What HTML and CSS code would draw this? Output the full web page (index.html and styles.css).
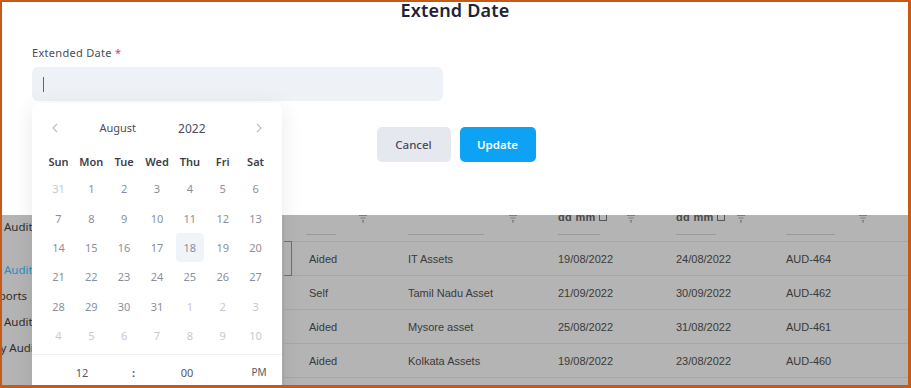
FILE: index.html
```html
<!DOCTYPE html>
<html lang="en">
<head>
    <meta charset="UTF-8">
    <meta name="viewport" content="width=device-width, initial-scale=1.0">
    <title>Extend Date</title>
    <link rel="stylesheet" href="styles.css">
</head>
<body>
    <div class="frame">
        <div class="modal">
            <h2 class="modal-title">Extend Date</h2>
            <div class="field">
                <label class="field-label">Extended Date <span class="req">*</span></label>
                <div class="field-input"><span class="caret"></span></div>
            </div>
            <div class="actions">
                <button class="btn btn-cancel">Cancel</button>
                <button class="btn btn-update">Update</button>
            </div>
        </div>

        <div class="backdrop">
            <ul class="side">
                <li class="side-first">Audit Plan</li>
                <li class="side-active">Audit List</li>
                <li class="side-cut1">Reports</li>
                <li>Audit Tasks</li>
                <li class="side-cut2">My Audits</li>
            </ul>
            <div class="table">
                <div class="row head">
                    <div class="cell c0"></div>
                    <div class="cell c1"><div class="htop"><span></span><svg class="filter" viewBox="0 0 8 8"><path d="M0 0.5h8M1.5 3h5M3 5.5h2M4 5.5v2.5" stroke="#7d7d7d" stroke-width="1.2" fill="none"/></svg></div><div class="uline w30"></div></div>
                    <div class="cell c2"><div class="htop"><span></span><svg class="filter" viewBox="0 0 8 8"><path d="M0 0.5h8M1.5 3h5M3 5.5h2M4 5.5v2.5" stroke="#7d7d7d" stroke-width="1.2" fill="none"/></svg></div><div class="uline w76"></div></div>
                    <div class="cell c3"><div class="htop"><span class="dd">dd mm <i class="cal"></i></span><svg class="filter" viewBox="0 0 8 8"><path d="M0 0.5h8M1.5 3h5M3 5.5h2M4 5.5v2.5" stroke="#7d7d7d" stroke-width="1.2" fill="none"/></svg></div><div class="uline w42"></div></div>
                    <div class="cell c4"><div class="htop"><span class="dd">dd mm <i class="cal"></i></span><svg class="filter" viewBox="0 0 8 8"><path d="M0 0.5h8M1.5 3h5M3 5.5h2M4 5.5v2.5" stroke="#7d7d7d" stroke-width="1.2" fill="none"/></svg></div><div class="uline w40"></div></div>
                    <div class="cell c5 last"><div class="htop"><span></span><svg class="filter" viewBox="0 0 8 8"><path d="M0 0.5h8M1.5 3h5M3 5.5h2M4 5.5v2.5" stroke="#7d7d7d" stroke-width="1.2" fill="none"/></svg></div><div class="uline w49"></div></div>
                </div>
                <div class="row">
                    <div class="cell c0 picked"></div>
                    <div class="cell c1">Aided</div>
                    <div class="cell c2">IT Assets</div>
                    <div class="cell c3">19/08/2022</div>
                    <div class="cell c4">24/08/2022</div>
                    <div class="cell c5">AUD-464</div>
                </div>
                <div class="row">
                    <div class="cell c0"></div>
                    <div class="cell c1">Self</div>
                    <div class="cell c2">Tamil Nadu Asset</div>
                    <div class="cell c3">21/09/2022</div>
                    <div class="cell c4">30/09/2022</div>
                    <div class="cell c5">AUD-462</div>
                </div>
                <div class="row">
                    <div class="cell c0"></div>
                    <div class="cell c1">Aided</div>
                    <div class="cell c2">Mysore asset</div>
                    <div class="cell c3">25/08/2022</div>
                    <div class="cell c4">31/08/2022</div>
                    <div class="cell c5">AUD-461</div>
                </div>
                <div class="row">
                    <div class="cell c0"></div>
                    <div class="cell c1">Aided</div>
                    <div class="cell c2">Kolkata Assets</div>
                    <div class="cell c3">19/08/2022</div>
                    <div class="cell c4">23/08/2022</div>
                    <div class="cell c5">AUD-460</div>
                </div>
                <div class="row">
                    <div class="cell c0"></div>
                    <div class="cell c1"></div>
                    <div class="cell c2"></div>
                    <div class="cell c3"></div>
                    <div class="cell c4"></div>
                    <div class="cell c5"></div>
                </div>
            </div>
        </div>

        <div class="calendar">
            <div class="cal-head">
                <svg class="arrow" viewBox="0 0 6 10"><path d="M5 1L1 5l4 4" stroke="#b9bdc8" stroke-width="1.1" fill="none"/></svg>
                <div class="cal-title"><span>August</span><span class="year">2022</span></div>
                <svg class="arrow" viewBox="0 0 6 10"><path d="M1 1l4 4-4 4" stroke="#b9bdc8" stroke-width="1.1" fill="none"/></svg>
            </div>
            <div class="weekdays">
                <span>Sun</span><span>Mon</span><span>Tue</span><span>Wed</span><span>Thu</span><span>Fri</span><span>Sat</span>
            </div>
            <div class="days">
                <span class="other">31</span><span>1</span><span>2</span><span>3</span><span>4</span><span>5</span><span>6</span>
                <span>7</span><span>8</span><span>9</span><span>10</span><span>11</span><span>12</span><span>13</span>
                <span>14</span><span>15</span><span>16</span><span>17</span><span class="today">18</span><span>19</span><span>20</span>
                <span>21</span><span>22</span><span>23</span><span>24</span><span>25</span><span>26</span><span>27</span>
                <span>28</span><span>29</span><span>30</span><span>31</span><span class="other">1</span><span class="other">2</span><span class="other">3</span>
                <span class="other">4</span><span class="other">5</span><span class="other">6</span><span class="other">7</span><span class="other">8</span><span class="other">9</span><span class="other">10</span>
            </div>
            <div class="time">
                <span>12</span><span class="colon">:</span><span>00</span><span class="ampm">PM</span>
            </div>
        </div>
    </div>
</body>
</html>
```

FILE: styles.css
```css
body {
    margin: 0;
    font-family: "Noto Sans", Arial, sans-serif;
}

.frame {
    position: relative;
    width: 911px;
    height: 388px;
    box-sizing: border-box;
    border: 2px solid #c65a16;
    border-right-width: 3px;
    border-bottom-width: 3px;
    overflow: hidden;
    background: #fff;
}

/* modal */
.modal {
    height: 213px;
    background: #fff;
}

.modal-title {
    margin: 0;
    text-align: center;
    font-size: 18px;
    line-height: 16px;
    font-weight: 600;
    letter-spacing: 0.2px;
    color: #1e2236;
}

.field {
    padding: 28px 0 0 30px;
}

.field-label {
    display: block;
    font-size: 11px;
    line-height: 14px;
    letter-spacing: 0.3px;
    color: #4a4d57;
}

.req {
    color: #e53950;
}

.field-input {
    margin-top: 7px;
    width: 411px;
    height: 34px;
    box-sizing: border-box;
    padding: 10px 0 0 11px;
    background: #eef2f7;
    border-radius: 6px;
}

.caret {
    display: block;
    width: 1px;
    height: 15px;
    background: #666;
}

.actions {
    display: flex;
    justify-content: center;
    gap: 9px;
    margin-top: 26px;
    padding-left: 2px;
}

.btn {
    height: 35px;
    border: none;
    border-radius: 5px;
    font-family: "Noto Sans", Arial, sans-serif;
    font-size: 11.5px;
    cursor: pointer;
}

.btn-cancel {
    width: 74px;
    background: #e6e8f0;
    color: #4a4a58;
    font-weight: 500;
}

.btn-update {
    width: 76px;
    background: #0ea2f4;
    color: #fff;
    font-weight: 600;
}

/* page behind the modal */
.backdrop {
    display: flex;
    height: 171px;
    background: #b4b4b4;
    overflow: hidden;
}

.side {
    width: 281px;
    margin: 0;
    padding: 0;
    list-style: none;
    font-size: 11.5px;
    color: #2e2e2e;
    white-space: nowrap;
}

.side li {
    width: 30px;
    padding-left: 2px;
    overflow: hidden;
    line-height: 26px;
}

.side-first {
    margin-top: -1px;
    margin-bottom: 17px;
}

.side-active {
    color: #2a8bcb;
}

.side-cut1 {
    text-indent: -19px;
}

.side-cut2 {
    text-indent: -14px;
}

.table {
    flex: 1;
    border-left: 1px solid #a8a8a8;
    font-family: "Liberation Sans", Arial, sans-serif;
    font-size: 11px;
    color: #3a3a3a;
}

.row {
    display: flex;
    height: 34px;
    border-bottom: 1px solid #a7a7a7;
    box-sizing: border-box;
}

.row.head {
    height: 27px;
}

.cell {
    box-sizing: border-box;
    padding-left: 17px;
    display: flex;
    align-items: center;
}

.c0 { width: 8px; }
.c1 { width: 99px; }
.c2 { width: 150px; }
.c3 { width: 118px; }
.c4 { width: 110px; }
.c5 { flex: 1; }

.row .cell.c0 {
    padding: 0;
}

.picked {
    border: 1.5px solid #5b6bbd;
    border-left: none;
    margin-top: -1px;
    height: 35px;
}

.head .cell {
    flex-direction: column;
    align-items: stretch;
    padding-right: 24px;
}

.head .cell.c1 {
    padding-left: 14px;
}

.head .cell.last {
    padding-right: 41px;
}

.htop {
    display: flex;
    justify-content: space-between;
    height: 16px;
    margin-top: -9px;
}

.dd {
    margin-top: 4px;
    font-size: 11px;
    line-height: 14px;
    font-weight: 700;
    color: #4a4a4a;
    letter-spacing: 0.3px;
}

.cal {
    display: inline-block;
    width: 6px;
    height: 6px;
    border: 1px solid #555;
    vertical-align: 0;
}

.filter {
    width: 8px;
    height: 8px;
    margin-top: 9px;
}

.uline {
    height: 1px;
    background: #9a9a9a;
    margin-top: 12px;
}

.w30 { width: 30px; }
.w76 { width: 76px; }
.w42 { width: 42px; }
.w40 { width: 40px; }
.w49 { width: 49px; }

/* date picker */
.calendar {
    position: absolute;
    left: 30px;
    top: 101px;
    width: 250px;
    height: 300px;
    background: #fff;
    border-radius: 6px;
    box-shadow: 0 4px 22px rgba(0, 0, 0, 0.09);
    z-index: 2;
}

.cal-head {
    display: flex;
    justify-content: space-between;
    align-items: center;
    height: 20px;
    margin-top: 15px;
    padding: 0 20px;
}

.arrow {
    width: 6px;
    height: 10px;
}

.cal-title {
    display: flex;
    gap: 42px;
    margin-right: 9px;
    font-size: 11px;
    color: #4b4d5a;
}

.cal-title .year {
    font-size: 12px;
}

.weekdays {
    display: grid;
    grid-template-columns: repeat(7, 1fr);
    margin: 14px 10px 0;
    line-height: 20px;
    font-size: 11px;
    font-weight: 600;
    color: #3c3e4b;
    text-align: center;
}

.days {
    display: grid;
    grid-template-columns: repeat(7, 1fr);
    grid-auto-rows: 29.4px;
    margin: 2px 10px 0;
    font-size: 11px;
    color: #8b8f9d;
    text-align: center;
}

.days span {
    display: flex;
    align-items: center;
    justify-content: center;
}

.days .other {
    color: #c6c9d1;
}

.days .today {
    width: 28px;
    height: 29px;
    margin: 0 auto;
    background: #f0f4f8;
    border-radius: 4px;
}

.time {
    display: grid;
    grid-template-columns: 100px 2px 106px 38px;
    margin-top: 4px;
    height: 34px;
    align-items: center;
    border-top: 1px solid #eef0f4;
    font-size: 11px;
    color: #555866;
    text-align: center;
}

.time .colon {
    font-weight: 700;
}

.time .ampm {
    font-size: 10px;
}
```
